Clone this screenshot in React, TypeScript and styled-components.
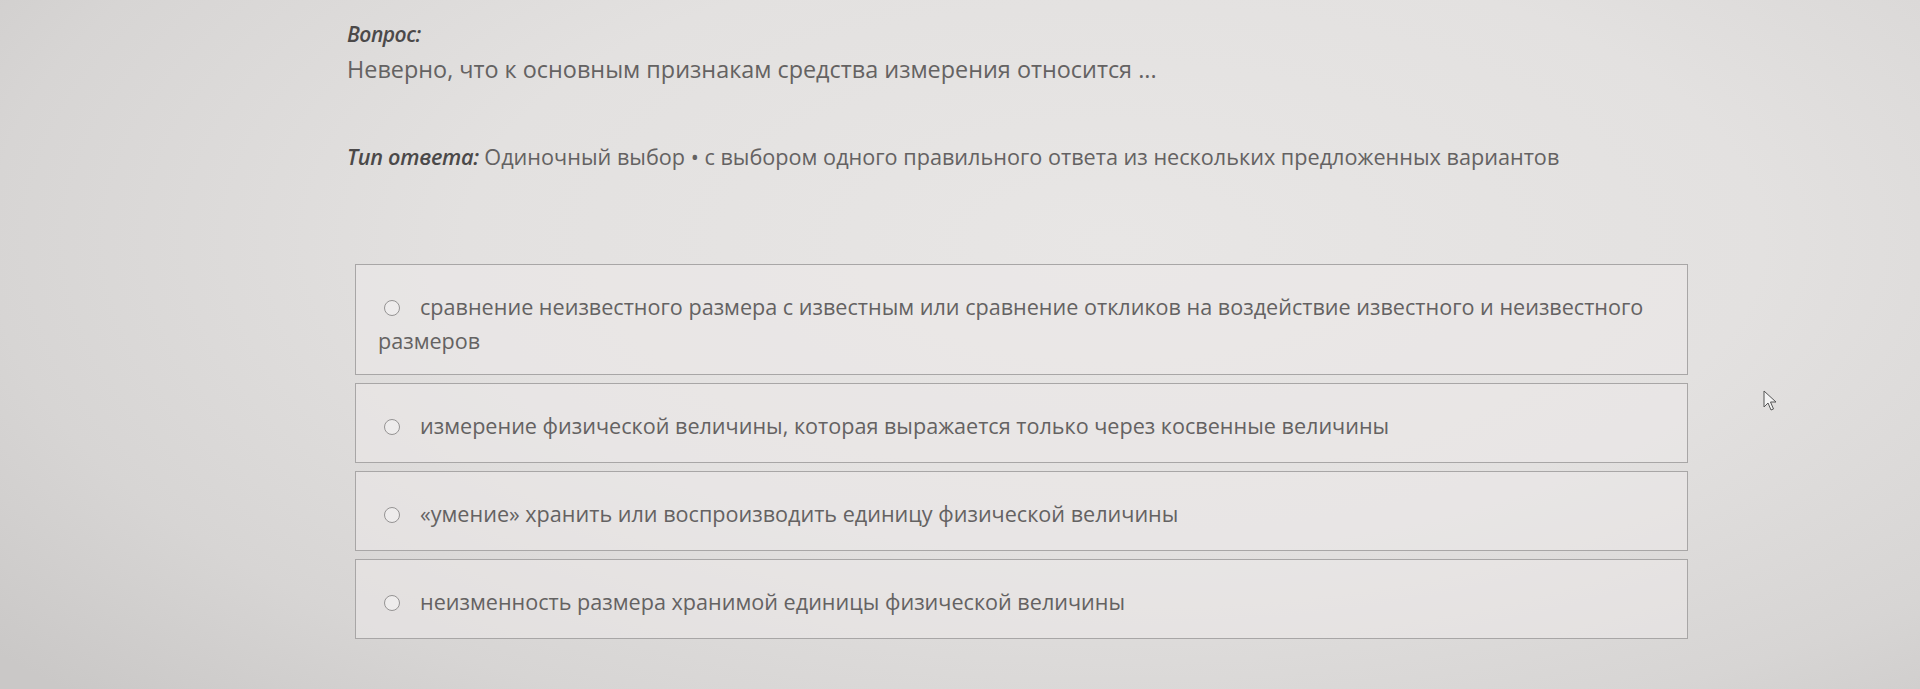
import React from "react";
import styled, { createGlobalStyle } from "styled-components";

const Global = createGlobalStyle`
  html, body { margin: 0; padding: 0; }
  body {
    width: 1920px;
    height: 689px;
    overflow: hidden;
    font-family: "Open Sans", "Noto Sans", sans-serif;
    background:
      radial-gradient(ellipse 75% 95% at 58% 35%, #e8e6e5 0%, #e3e1e0 45%, #d7d5d4 78%, #cac8c7 100%);
  }
`;

const Page = styled.main`
  position: relative;
  width: 1920px;
  height: 689px;
  padding: 20px 0 0 347px;
  box-sizing: border-box;
  color: #646262;
`;

const Label = styled.div`
  font-size: 21px;
  font-weight: 600;
  font-style: italic;
  letter-spacing: -0.5px;
  color: #4b4949;
  line-height: 28px;
`;

const Question = styled.p`
  margin: 6px 0 0;
  font-size: 23.4px;
  line-height: 30px;
  color: #646262;
`;

const TypeLine = styled.p`
  margin: 58px 0 0;
  font-size: 21.65px;
  line-height: 30px;
  color: #646262;
`;

const TypeLabel = styled.span`
  font-weight: 600;
  font-style: italic;
  letter-spacing: -0.3px;
  color: #4b4949;
`;

const Options = styled.div`
  margin: 92px 0 0 8px;
  width: 1333px;
  display: flex;
  flex-direction: column;
  gap: 8px;
`;

const Option = styled.label`
  display: block;
  box-sizing: border-box;
  min-height: 80px;
  padding: 25px 18px 16px 22px;
  border: 1.5px solid #a8a6a6;
  background: rgba(236, 234, 233, 0.55);
  font-size: 21.6px;
  line-height: 34px;
  color: #646262;
  cursor: pointer;
`;

const Radio = styled.span`
  display: inline-block;
  width: 16px;
  height: 16px;
  border: 1.5px solid #959393;
  border-radius: 50%;
  box-sizing: border-box;
  margin: 0 20px 0 6px;
  vertical-align: -1px;
  background: #eeecec;
`;

const Cursor = styled.svg`
  position: absolute;
  left: 1763px;
  top: 390px;
  width: 14px;
  height: 22px;
`;

const options = [
  "сравнение неизвестного размера с известным или сравнение откликов на воздействие известного и неизвестного размеров",
  "измерение физической величины, которая выражается только через косвенные величины",
  "«умение» хранить или воспроизводить единицу физической величины",
  "неизменность размера хранимой единицы физической величины",
];

export default function App() {
  return (
    <>
      <Global />
      <Page>
        <Label>Вопрос:</Label>
        <Question>
          Неверно, что к основным признакам средства измерения относится ...
        </Question>
        <TypeLine>
          <TypeLabel>Тип ответа:</TypeLabel> Одиночный выбор • с выбором одного
          правильного ответа из нескольких предложенных вариантов
        </TypeLine>
        <Options>
          {options.map((o) => (
            <Option key={o}>
              <Radio />
              {o}
            </Option>
          ))}
        </Options>
        <Cursor viewBox="0 0 14 22">
          <path
            d="M1 1 L1 17 L5 13 L8 20 L10.5 19 L7.5 12 L13 12 Z"
            fill="#f4f4f4"
            stroke="#555"
            strokeWidth="1"
            strokeLinejoin="round"
          />
        </Cursor>
      </Page>
    </>
  );
}
